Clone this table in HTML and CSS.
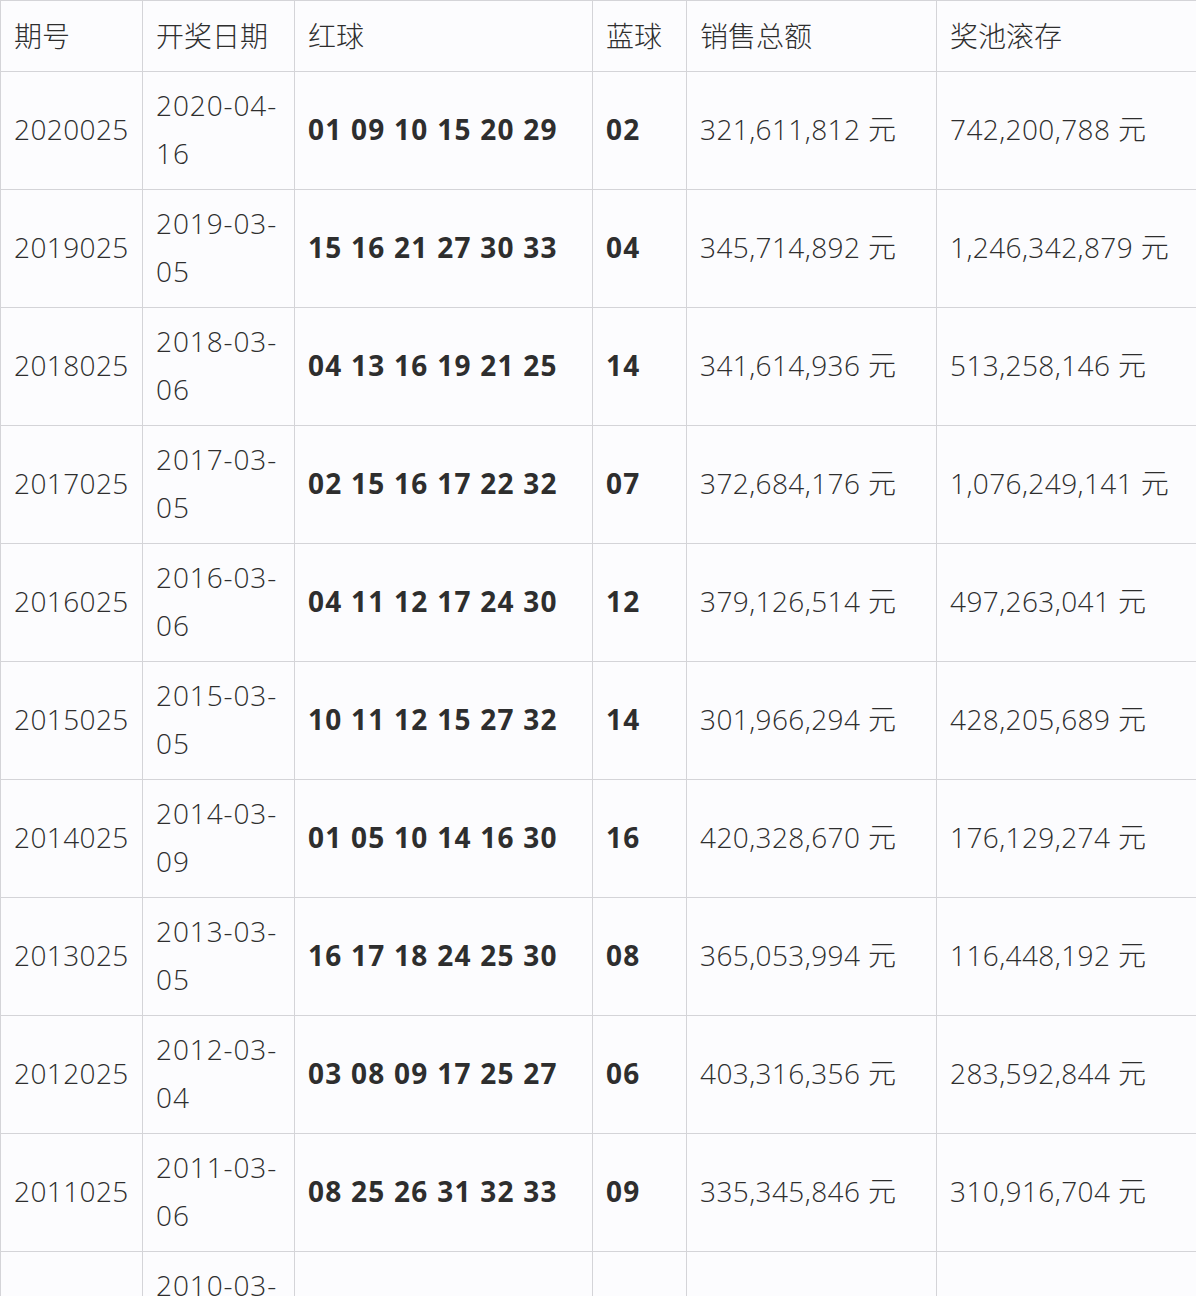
FILE: index.html
```html
<!DOCTYPE html>
<html lang="zh-CN">
<head>
<meta charset="utf-8">
<title>双色球历年第025期开奖</title>
<link rel="stylesheet" href="styles.css">
</head>
<body>
<table class="draws">
  <colgroup>
    <col class="c-issue"><col class="c-date"><col class="c-red"><col class="c-blue"><col class="c-sales"><col class="c-pool">
  </colgroup>
  <thead>
    <tr><th>期号</th><th>开奖日期</th><th>红球</th><th>蓝球</th><th>销售总额</th><th>奖池滚存</th></tr>
  </thead>
  <tbody>
    <tr><td>2020025</td><td class="d">2020-04-<wbr>16</td><td class="b">01 09 10 15 20 29</td><td class="b">02</td><td>321,611,812 元</td><td>742,200,788 元</td></tr>
    <tr><td>2019025</td><td class="d">2019-03-<wbr>05</td><td class="b">15 16 21 27 30 33</td><td class="b">04</td><td>345,714,892 元</td><td>1,246,342,879 元</td></tr>
    <tr><td>2018025</td><td class="d">2018-03-<wbr>06</td><td class="b">04 13 16 19 21 25</td><td class="b">14</td><td>341,614,936 元</td><td>513,258,146 元</td></tr>
    <tr><td>2017025</td><td class="d">2017-03-<wbr>05</td><td class="b">02 15 16 17 22 32</td><td class="b">07</td><td>372,684,176 元</td><td>1,076,249,141 元</td></tr>
    <tr><td>2016025</td><td class="d">2016-03-<wbr>06</td><td class="b">04 11 12 17 24 30</td><td class="b">12</td><td>379,126,514 元</td><td>497,263,041 元</td></tr>
    <tr><td>2015025</td><td class="d">2015-03-<wbr>05</td><td class="b">10 11 12 15 27 32</td><td class="b">14</td><td>301,966,294 元</td><td>428,205,689 元</td></tr>
    <tr><td>2014025</td><td class="d">2014-03-<wbr>09</td><td class="b">01 05 10 14 16 30</td><td class="b">16</td><td>420,328,670 元</td><td>176,129,274 元</td></tr>
    <tr><td>2013025</td><td class="d">2013-03-<wbr>05</td><td class="b">16 17 18 24 25 30</td><td class="b">08</td><td>365,053,994 元</td><td>116,448,192 元</td></tr>
    <tr><td>2012025</td><td class="d">2012-03-<wbr>04</td><td class="b">03 08 09 17 25 27</td><td class="b">06</td><td>403,316,356 元</td><td>283,592,844 元</td></tr>
    <tr><td>2011025</td><td class="d">2011-03-<wbr>06</td><td class="b">08 25 26 31 32 33</td><td class="b">09</td><td>335,345,846 元</td><td>310,916,704 元</td></tr>
    <tr><td>2010025</td><td class="d">2010-03-<wbr>04</td><td class="b">05 09 14 22 28 30</td><td class="b">11</td><td>298,164,502 元</td><td>352,487,612 元</td></tr>
  </tbody>
</table>
</body>
</html>
```
FILE: styles.css
```css
html, body {
  margin: 0;
  padding: 0;
  background: #fcfcfe;
}
.draws {
  border-collapse: collapse;
  table-layout: fixed;
  width: 1197px;
  font-family: "Open Sans", "Noto Sans CJK SC", sans-serif;
  font-weight: 300;
  font-size: 28px;
  line-height: 48px;
  color: #2e2e2e;
}
.c-issue { width: 142px; }
.c-date { width: 152px; }
.c-red { width: 298px; }
.c-blue { width: 94px; }
.c-sales { width: 250px; }
.c-pool { width: 261px; }
.draws th, .draws td {
  border: 1px solid #d4d4d8;
  padding: 9px 13px 12px;
  text-align: left;
  vertical-align: middle;
  font-weight: 300;
  letter-spacing: 0.4px;
}
.draws th {
  padding: 11px 13px 11px;
  letter-spacing: 0;
}
.draws td.d {
  letter-spacing: 0.9px;
}
.draws td.b {
  font-weight: 700;
  letter-spacing: 1.25px;
}
```
